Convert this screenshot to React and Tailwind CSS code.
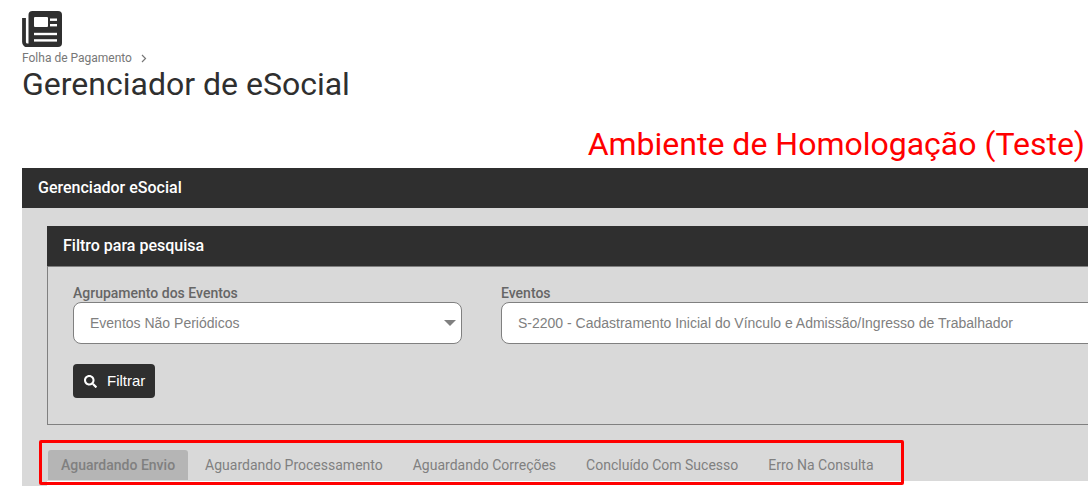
import React from "react";
import { FaSearch } from "react-icons/fa";

const tabs = ["Aguardando Processamento", "Aguardando Correções", "Concluído Com Sucesso", "Erro Na Consulta"];

function NewspaperIcon() {
  return (
    <svg width="40" height="36" viewBox="0 0 40 36">
      <path d="M2 7V31a3.5 3.5 0 0 0 3.5 3.5H10" fill="none" stroke="#2f2f2f" strokeWidth="3.8" />
      <rect x="6.5" y="0" width="33.5" height="36" rx="4" fill="#2f2f2f" />
      <rect x="12" y="6" width="14" height="10" rx="1" fill="#fff" />
      <rect x="28" y="7.5" width="7" height="2.4" fill="#fff" />
      <rect x="28" y="13" width="7" height="2.4" fill="#fff" />
      <rect x="12" y="21.8" width="23" height="2.4" fill="#fff" />
      <rect x="12" y="28.2" width="23" height="2.4" fill="#fff" />
    </svg>
  );
}

export default function App() {
  return (
    <div className="relative h-[486px] w-[1088px] overflow-hidden bg-white pl-[22px] font-['Roboto',sans-serif]">
      <div className="flex h-[50px] items-start pt-[11px]">
        <NewspaperIcon />
      </div>
      <div className="flex h-[16px] items-center text-[12px] leading-[16px] text-[#777777]">
        <span>Folha de Pagamento</span>
        <svg className="ml-[9px]" width="6" height="9" viewBox="0 0 6 9" fill="none" stroke="#777777" strokeWidth="1.2">
          <path d="M1 1l3.5 3.5L1 8" />
        </svg>
      </div>
      <h1 className="-mt-[1px] h-[38px] text-[32px] leading-[38px] font-normal text-[#2f2f2f]">Gerenciador de eSocial</h1>
      <div className="mt-[19px] mb-[2px] flex h-[44px] items-center justify-end pr-[3px] text-[32px] leading-[38px] text-[#ff0000]">
        <span className="-mt-[1px]">Ambiente de Homologação (Teste)</span>
      </div>
      <div className="w-[1200px]">
        <div className="flex h-[40px] items-center bg-[#2f2f2f] pl-[16px] text-[16px] font-medium text-white">Gerenciador eSocial</div>
        <div className="h-[278px] bg-[#d9d9d9] pl-[25px] pt-[18px]">
          <div className="h-[199px] border border-[#808080] bg-[#d9d9d9]">
            <div className="-m-px flex h-[41px] items-center border-b border-[#808080] bg-[#2f2f2f] pl-[16px] text-[16px] font-medium text-white">Filtro para pesquisa</div>
            <div className="flex gap-[39px] pl-[25px] pt-[20px]">
              <div className="w-[389px]">
                <label className="block h-[16px] text-[14px] leading-[14px] font-medium text-[#666666]">Agrupamento dos Eventos</label>
                <div className="relative flex h-[42px] items-center rounded-[8px] border border-[#808080] bg-white pl-[16px] font-['Liberation_Sans',sans-serif] text-[14px] text-[#808080]">
                  Eventos Não Periódicos
                  <span className="absolute right-[5px] top-[17px] h-0 w-0 border-x-[6px] border-t-[6px] border-x-transparent border-t-[#808080]" />
                </div>
              </div>
              <div className="w-[660px]">
                <label className="block h-[16px] text-[14px] leading-[14px] font-medium text-[#666666]">Eventos</label>
                <div className="flex h-[42px] items-center rounded-[8px] border border-[#808080] bg-white pl-[16px] font-['Liberation_Sans',sans-serif] text-[14px] text-[#808080]">
                  S-2200 - Cadastramento Inicial do Vínculo e Admissão/Ingresso de Trabalhador
                </div>
              </div>
            </div>
            <div className="pl-[25px] pt-[20px]">
              <button className="flex h-[34px] w-[82px] items-center rounded-[4px] bg-[#2f2f2f] pl-[11px] font-['Liberation_Sans',sans-serif] text-[15px] text-white">
                <FaSearch className="mr-[10px]" style={{ width: 13, height: 13 }} />
                Filtrar
              </button>
            </div>
          </div>
          <div className="mt-[25px] flex h-[31px] gap-[4px] bg-[#d9d9d9] pl-[1px]">
            <div className="flex h-[30px] items-center rounded-t-[3px] bg-[#b5b5b5] px-[13px] text-[14px] font-medium text-[#808080]">Aguardando Envio</div>
            {tabs.map((t) => (
              <div key={t} className="flex h-[30px] items-center px-[13px] text-[14px] text-[#808080]">{t}</div>
            ))}
          </div>
          <div className="h-[10px] bg-white" />
        </div>
      </div>
      <div className="absolute left-[39px] top-[440px] h-[45px] w-[865px] rounded-[2px] border-[3px] border-[#ff0000]" />
    </div>
  );
}
